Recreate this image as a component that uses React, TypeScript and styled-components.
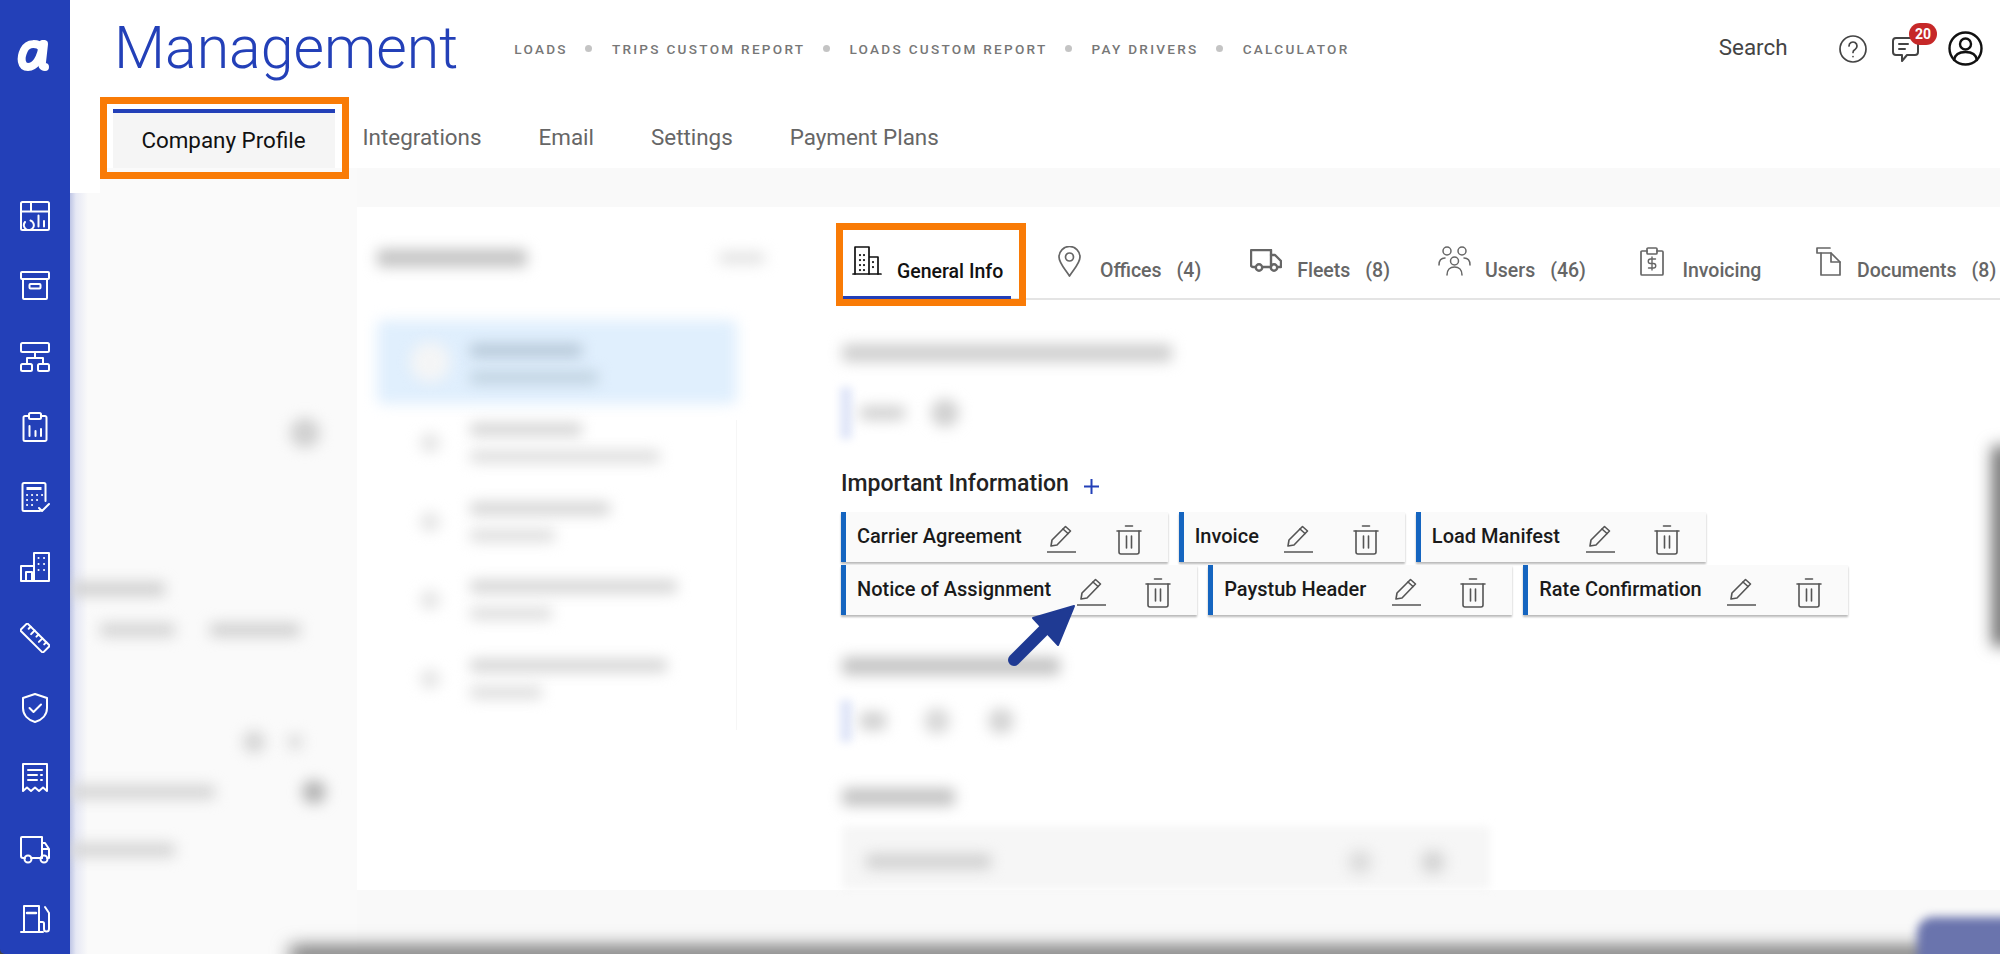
import React from "react";
import styled, { createGlobalStyle } from "styled-components";

const Global = createGlobalStyle`
  html, body { margin: 0; padding: 0; background: #fff; }
  body { font-family: Roboto, "Liberation Sans", sans-serif; overflow: hidden; }
  * { box-sizing: border-box; }
`;

const App_ = styled.div`
  position: relative;
  display: flex;
  width: 2000px;
  height: 954px;
  overflow: hidden;
  background: #444;
`;

const Sidebar = styled.nav`
  position: relative;
  z-index: 3;
  flex: 0 0 70px;
  display: flex;
  flex-direction: column;
  align-items: center;
  gap: 40.3px;
  padding-top: 201px;
  background: #2340b8;
  border-bottom-left-radius: 5px;
`;

const LogoMark = styled.svg`
  position: absolute;
  left: 15px;
  top: 39px;
`;

const SideIcon = styled.svg`
  display: block;
  flex: none;
  fill: none;
  stroke: #fff;
  stroke-width: 2;
  stroke-linecap: round;
  stroke-linejoin: round;
`;

const Main = styled.div`
  flex: 1;
  display: flex;
  flex-direction: column;
  min-width: 0;
  background: #fff;
`;

const Header = styled.header`
  position: relative;
  z-index: 2;
  flex: 0 0 168px;
  background: #fff;
  display: flex;
  flex-direction: column;
  &::after {
    content: "";
    position: absolute;
    left: 0;
    top: 100%;
    width: 30px;
    height: 25px;
    background: #fff;
  }
`;

const TopRow = styled.div`
  flex: 0 0 97px;
  display: flex;
  align-items: center;
  padding: 0 17px 0 44px;
`;

const Title = styled.h1`
  margin: 0 0 2px;
  font-size: 59px;
  line-height: 70px;
  font-weight: 300;
  color: #2340b8;
  letter-spacing: 0;
`;

const QuickNav = styled.div`
  display: flex;
  align-items: center;
  margin: 0 0 0 56px;
`;

const QuickLink = styled.span`
  font-size: 13.6px;
  font-weight: 500;
  letter-spacing: 2.27px;
  color: #777;
  white-space: nowrap;
`;

const Dot = styled.i`
  width: 7px;
  height: 7px;
  border-radius: 50%;
  background: #c4c4c4;
  margin: 0 19.5px 0 17.5px;
`;

const HeaderRight = styled.div`
  margin-left: auto;
  display: flex;
  align-items: center;
`;

const Search = styled.span`
  font-size: 22.4px;
  color: #444;
  margin: 0 51.5px 4px 0;
`;

const HeadIcon = styled.svg`
  display: block;
  fill: none;
  stroke: ${(p) => p.color || "#444"};
  stroke-width: 2;
  stroke-linecap: round;
  stroke-linejoin: round;
`;

const ChatWrap = styled.div`
  position: relative;
  margin: 0 25px 0 25px;
`;

const Badge = styled.span`
  position: absolute;
  left: 17px;
  top: -13px;
  width: 28px;
  height: 22px;
  border-radius: 11px;
  background: #c62828;
  color: #fff;
  font-size: 14px;
  font-weight: 700;
  line-height: 22px;
  text-align: center;
`;

const MainTabs = styled.div`
  display: flex;
  align-items: flex-start;
  padding: 12px 0 0 42.5px;
  gap: 57px;
`;

const MainTab = styled.div`
  font-size: 22.4px;
  line-height: 30px;
  color: #666;
  white-space: nowrap;
  margin-top: 13px;
`;

const ActiveMainTab = styled.div`
  position: relative;
  width: 222px;
  height: 59px;
  margin-right: -29px;
  border-top: 4px solid #2340b8;
  background: #f5f5f5;
  color: #111;
  font-size: 22.4px;
  line-height: 54px;
  text-align: center;
  &::after {
    content: "";
    position: absolute;
    left: -12.5px;
    right: -14px;
    top: -16px;
    bottom: -11px;
    border: 7px solid #f97b06;
  }
`;

const Body = styled.div`
  position: relative;
  flex: 1;
  display: flex;
  background: #f9f9f9;
  min-height: 0;
`;

const LeftCol = styled.aside`
  position: relative;
  flex: 0 0 287px;
  background: linear-gradient(90deg, #bfc6e6 0, #e6e8f4 6px, #fafafa 18px);
  padding-top: 26px;
`;

const Panel = styled.section`
  flex: 1;
  height: 683px;
  margin-top: 39px;
  background: #fff;
  display: flex;
  min-width: 0;
`;

const ListCol = styled.div`
  flex: 0 0 486px;
  padding: 41px 0 0 20px;
  position: relative;
`;

const Fuzz = styled.div<{ $w: number; $h?: number; $c?: string; $r?: number; $b?: number }>`
  flex: none;
  width: ${(p) => p.$w}px;
  height: ${(p) => p.$h ?? 16}px;
  background: ${(p) => p.$c ?? "#d4d4d4"};
  border-radius: ${(p) => p.$r ?? 4}px;
  filter: blur(${(p) => p.$b ?? 7}px);
`;

const ListHead = styled.div`
  display: flex;
  align-items: center;
  justify-content: space-between;
  width: 388px;
  height: 20px;
  margin-bottom: 52px;
`;

const ListRow = styled.div<{ $sel?: boolean }>`
  position: relative;
  display: flex;
  align-items: center;
  gap: ${(p) => (p.$sel ? 20 : 30)}px;
  width: 360px;
  height: ${(p) => (p.$sel ? 84 : 78.5)}px;
  padding-left: ${(p) => (p.$sel ? 33 : 43)}px;
`;

const SelectedBg = styled.div`
  position: absolute;
  inset: 0;
  background: #e0effd;
  border-radius: 6px;
  filter: blur(7px);
`;

const RowLines = styled.div<{ $top?: number }>`
  position: relative;
  display: flex;
  flex-direction: column;
  gap: 14px;
  margin-top: ${(p) => p.$top ?? 0}px;
`;

const RowCircle = styled.div<{ $s: number; $c: string }>`
  position: relative;
  flex: none;
  width: ${(p) => p.$s}px;
  height: ${(p) => p.$s}px;
  border-radius: 50%;
  background: ${(p) => p.$c};
  filter: blur(7px);
`;

const ListDivider = styled.div`
  position: absolute;
  left: 379px;
  top: 213px;
  width: 1px;
  height: 310px;
  background: #f6f6f6;
`;

const RightCol = styled.div`
  flex: 1;
  min-width: 0;
  padding-top: 23px;
  display: flex;
  flex-direction: column;
`;

const InfoTabs = styled.div`
  display: flex;
  align-items: stretch;
  height: 70px;
  border-bottom: 2px solid #e4e4e4;
`;

const InfoTab = styled.div<{ $lead: number; $gap: number }>`
  display: flex;
  align-items: flex-end;
  gap: ${(p) => p.$gap}px;
  margin-left: ${(p) => p.$lead}px;
  padding-bottom: 15px;
  font-size: 19.5px;
  font-weight: 500;
  line-height: 24px;
  color: #666;
  white-space: nowrap;
`;

const ActiveInfoTab = styled.div`
  position: relative;
  width: 168px;
  height: 69px;
  padding: 0 0 12px 9px;
  display: flex;
  align-items: flex-end;
  gap: 15px;
  border-bottom: 3px solid #2340b8;
  font-size: 19.5px;
  font-weight: 500;
  line-height: 24px;
  color: #111;
  white-space: nowrap;
  &::after {
    content: "";
    position: absolute;
    left: -7px;
    right: -15px;
    top: -7px;
    bottom: -10px;
    border: 7px solid #f97b06;
  }
`;

const TabIcon = styled.svg<{ $mb: number; $sw?: number }>`
  display: block;
  flex: none;
  margin-bottom: ${(p) => p.$mb}px;
  fill: none;
  stroke: currentColor;
  stroke-width: ${(p) => p.$sw ?? 1.7};
  stroke-linecap: round;
  stroke-linejoin: round;
`;

const Count = styled.span`
  margin-left: 15px;
`;

const Section = styled.div`
  display: flex;
  flex-direction: column;
`;

const FuzzHead = styled.div<{ $top: number }>`
  display: flex;
  align-items: center;
  height: 20px;
  margin: ${(p) => p.$top}px 0 0 -1px;
`;

const FuzzChip = styled.div<{ $w: number; $h: number; $top: number; $gap: number }>`
  position: relative;
  display: flex;
  align-items: center;
  gap: ${(p) => p.$gap}px;
  width: ${(p) => p.$w}px;
  height: ${(p) => p.$h}px;
  margin: ${(p) => p.$top}px 0 0 -3px;
  padding-left: 20px;
  &::before {
    content: "";
    position: absolute;
    left: 0;
    top: 4px;
    bottom: 4px;
    width: 12px;
    background: #dfe5f8;
    filter: blur(4px);
  }
`;

const SectionTitle = styled.h2`
  margin: 26px 0 13px -2px;
  display: flex;
  align-items: center;
  gap: 15px;
  font-size: 23px;
  line-height: 30px;
  font-weight: 500;
  color: #222;
`;

const Plus = styled.svg`
  display: block;
  margin-top: 4px;
  stroke: #2340b8;
  stroke-width: 2;
`;

const CardRow = styled.div`
  display: flex;
  gap: 11px;
  margin: 0 0 3px -2px;
`;

const Card = styled.div`
  display: flex;
  align-items: flex-start;
  height: 50px;
  padding: 13px 26px 0 11px;
  background: #fafafa;
  border-left: 5px solid #1565c0;
  box-shadow: 0 2px 2px rgba(0, 0, 0, 0.28);
`;

const CardLabel = styled.span`
  font-size: 20px;
  line-height: 24px;
  font-weight: 500;
  color: #1a1a1a;
  white-space: nowrap;
  margin: -1px 25.5px 0 0;
`;

const ActionIcon = styled.svg<{ $ml?: number }>`
  display: block;
  flex: none;
  margin-left: ${(p) => p.$ml ?? 0}px;
  fill: none;
  stroke: #555;
  stroke-width: 1.6;
  stroke-linecap: round;
  stroke-linejoin: round;
`;

const FuzzField = styled.div`
  position: relative;
  display: flex;
  align-items: center;
  width: 648px;
  height: 63px;
  margin: 19px 0 0 -1px;
  padding: 8px 45px 0 24px;
  &::before {
    content: "";
    position: absolute;
    inset: 0;
    background: #f6f6f6;
    border-radius: 4px;
    filter: blur(4px);
  }
`;

const FieldActions = styled.div`
  margin-left: auto;
  display: flex;
  gap: 49px;
`;

const LeftRow = styled.div<{ $top: number; $left?: number; $gap?: number }>`
  position: relative;
  display: flex;
  align-items: center;
  gap: ${(p) => p.$gap ?? 35}px;
  margin-top: ${(p) => p.$top}px;
  padding-left: ${(p) => p.$left ?? 0}px;
`;

const BottomShade = styled.div`
  position: absolute;
  left: 220px;
  right: -20px;
  bottom: -10px;
  height: 18px;
  background: #6f6f6f;
  filter: blur(9px);
`;

const Fab = styled.div`
  position: absolute;
  right: -25px;
  bottom: -25px;
  width: 108px;
  height: 62px;
  border-radius: 16px;
  background: #6a74ad;
  filter: blur(5px);
`;

const EdgeShade = styled.div`
  position: absolute;
  right: -12px;
  top: 278px;
  width: 20px;
  height: 200px;
  background: #6f6f6f;
  filter: blur(8px);
`;

const Arrow = styled.svg`
  position: absolute;
  left: 1000px;
  top: 596px;
  z-index: 4;
`;

const Pencil = () => (
  <ActionIcon width="29" height="28" viewBox="0 0 29 28">
    <path d="M4 21 5 15 18.5 1.5 23.5 6 10 20z" />
    <path d="M16 4l5 4.5" />
    <path d="M0 27h29" />
  </ActionIcon>
);

const Trash = () => (
  <ActionIcon $ml={39.5} width="26" height="30" viewBox="0 0 26 30">
    <path d="M9.5 1h7M1 6h24" />
    <path d="M3 6v21a2 2 0 0 0 2 2h16a2 2 0 0 0 2-2V6" />
    <path d="M10.5 11v12M15.5 11v12" />
  </ActionIcon>
);

const InfoCard = ({ label }: { label: string }) => (
  <Card>
    <CardLabel>{label}</CardLabel>
    <Pencil />
    <Trash />
  </Card>
);

const sideIcons: React.ReactNode[] = [
  <>
    <rect x="1" y="1" width="28" height="28" rx="1.5" />
    <path d="M1 10.5h28M11 1v9.5" />
    <path d="M10.5 19.5a5 5 0 1 1-5.5 1.5" />
    <path d="M18.5 14.5v11M24 20v5.5" />
  </>,
  <>
    <rect x="1" y="1" width="28" height="7" rx="1" />
    <path d="M3 8v19a1 1 0 0 0 1 1h22a1 1 0 0 0 1-1V8" />
    <rect x="9.5" y="13" width="11" height="4.5" rx="1" />
  </>,
  <>
    <rect x="1" y="1" width="28" height="9" rx="1.5" />
    <path d="M15 10v6M7 22v-6h16v6" />
    <rect x="1" y="22" width="11" height="7" rx="1.5" />
    <rect x="18" y="22" width="11" height="7" rx="1.5" />
  </>,
  <>
    <path d="M9 4H5a1.5 1.5 0 0 0-1.5 1.5V27.5A1.5 1.5 0 0 0 5 29h20a1.5 1.5 0 0 0 1.5-1.5V5.5A1.5 1.5 0 0 0 25 4h-4" />
    <rect x="9" y="1" width="12" height="6" rx="1.5" />
    <path d="M9.5 14v10M15.5 19v5M21 17v7" />
  </>,
  <>
    <path d="M20 29H4a1.5 1.5 0 0 1-1.5-1.5V2.5A1.5 1.5 0 0 1 4 1h20a1.5 1.5 0 0 1 1.5 1.5V19" />
    <path d="M6.5 6.5h15" strokeWidth="3" strokeLinecap="butt" />
    <path d="M7 13h.1M12 13h.1M17 13h.1M22 13h.1M7 18h.1M12 18h.1M17 18h.1M7 23h.1M12 23h.1" />
    <path d="M19 26l3 3 7-7" />
  </>,
  <>
    <path d="M1 29V14h13V1h15v28zM14 14v15" />
    <path d="M6 29v-9h6v9" />
    <path d="M18.5 6h.1M24 6h.1M18.5 12h.1M24 12h.1M18.5 18h.1M24 18h.1" />
  </>,
  <>
    <g transform="rotate(45 15 15)">
      <rect x="-1" y="10" width="32" height="10" rx="1" />
      <path d="M4 10v3M9.500 10v5M15 10v3M20.500 10v5M26 10v3" />
    </g>
  </>,
  <>
    <path d="M15 1 3 5v10c0 7 5 12 12 14 7-2 12-7 12-14V5z" />
    <path d="M9.5 15l4 4 7.5-7.5" />
  </>,
  <>
    <path d="M3 28V1h24v27l-4-3.5L19 28l-4-3.5L11 28l-4-3.5z" />
    <path d="M8 7h14M8 12h9M8 17h9M21 12h1M21 17h1" />
  </>,
  <>
    <path d="M5 24H3a2 2 0 0 1-2-2V4a1 1 0 0 1 1-1h20v21H11" />
    <path d="M22 9h3l4 6v9h-2M22 24h-1M22 15h7" />
    <circle cx="8" cy="25" r="3.5" />
    <circle cx="24" cy="25" r="3.5" />
  </>,
  <>
    <path d="M1 28h22M4 28V2h15v26" />
    <path d="M7 9h9" strokeWidth="2.5" />
    <path d="M19 18h3.5a1.5 1.5 0 0 1 1.5 1.5V25a2.5 2.5 0 0 0 5 0V9l-4-6" />
  </>,
];

export default function App() {
  return (
    <App_>
      <Global />
      <Sidebar>
        <LogoMark width="36" height="33" viewBox="0 0 36 33">
          <g fill="none" stroke="#fff" strokeWidth="8" strokeLinecap="round">
            <path d="M27 9C23 4 13 3 9 11 5 19 6 28 13 28c7 0 13-8 15-23" />
            <path d="M29 5 27 23c-.3 3 .5 5 3 5" />
          </g>
        </LogoMark>
        {sideIcons.map((icon, i) => (
          <SideIcon key={i} width="30" height="30" viewBox="0 0 30 30">
            {icon}
          </SideIcon>
        ))}
      </Sidebar>

      <Main>
        <Header>
          <TopRow>
            <Title>Management</Title>
            <QuickNav>
              <QuickLink>LOADS</QuickLink>
              <Dot />
              <QuickLink>TRIPS CUSTOM REPORT</QuickLink>
              <Dot />
              <QuickLink>LOADS CUSTOM REPORT</QuickLink>
              <Dot />
              <QuickLink>PAY DRIVERS</QuickLink>
              <Dot />
              <QuickLink>CALCULATOR</QuickLink>
            </QuickNav>
            <HeaderRight>
              <Search>Search</Search>
              <HeadIcon width="28" height="28" viewBox="0 0 28 28">
                <g strokeWidth="1.7">
                  <circle cx="14" cy="14" r="13" />
                  <path d="M10 11a4 4 0 1 1 6 3.5c-1.5.8-2 1.5-2 3" />
                  <path d="M14 21.5v.1" />
                </g>
              </HeadIcon>
              <ChatWrap>
                <HeadIcon width="31" height="26" viewBox="0 0 31 26">
                  <path d="M26 6v10a3 3 0 0 1-3 3h-8l-5 6v-6H4a3 3 0 0 1-3-3V5a3 3 0 0 1 3-3h16" />
                  <path d="M7 8h9M7 13h6" />
                </HeadIcon>
                <Badge>20</Badge>
              </ChatWrap>
              <HeadIcon color="#111" width="35" height="35" viewBox="0 0 35 35">
                <g strokeWidth="2.4">
                  <circle cx="17.5" cy="17.5" r="16" />
                  <circle cx="17.5" cy="13" r="5.5" />
                  <path d="M6 29c1-6 5-8 11.5-8S28 23 29 29" />
                </g>
              </HeadIcon>
            </HeaderRight>
          </TopRow>
          <MainTabs>
            <ActiveMainTab>Company Profile</ActiveMainTab>
            <MainTab>Integrations</MainTab>
            <MainTab>Email</MainTab>
            <MainTab>Settings</MainTab>
            <MainTab>Payment Plans</MainTab>
          </MainTabs>
        </Header>

        <Body>
          <LeftCol>
            <LeftRow $top={224} $left={220}>
              <RowCircle $s={30} $c="#d0d0d0" />
            </LeftRow>
            <LeftRow $top={134} $left={0}>
              <Fuzz $w={95} $h={14} $c="#cfcfcf" />
            </LeftRow>
            <LeftRow $top={27} $left={30}>
              <Fuzz $w={75} $h={14} $c="#d4d4d4" />
              <Fuzz $w={90} $h={14} $c="#d0d0d0" />
            </LeftRow>
            <LeftRow $top={94} $left={173} $gap={22}>
              <RowCircle $s={22} $c="#d4d4d4" />
              <RowCircle $s={16} $c="#dcdcdc" />
            </LeftRow>
            <LeftRow $top={27} $left={0} $gap={87}>
              <Fuzz $w={145} $h={14} $c="#d4d4d4" />
              <RowCircle $s={24} $c="#b4b4b4" />
            </LeftRow>
            <LeftRow $top={39} $left={0}>
              <Fuzz $w={105} $h={14} $c="#d4d4d4" />
            </LeftRow>
          </LeftCol>

          <Panel>
            <ListCol>
              <ListHead>
                <Fuzz $w={150} $h={18} $c="#c4c4c4" />
                <Fuzz $w={46} $h={12} $c="#e2e2e2" />
              </ListHead>
              <ListRow $sel>
                <SelectedBg />
                <RowCircle $s={40} $c="#f4f5f6" />
                <RowLines $top={4}>
                  <Fuzz $w={112} $h={13} $c="#b4c6d6" />
                  <Fuzz $w={128} $h={13} $c="#c0d2e0" />
                </RowLines>
              </ListRow>
              {[
                [112, 190],
                [140, 85],
                [207, 82],
                [197, 72],
              ].map(([a, b], i) => (
                <ListRow key={i}>
                  <RowCircle $s={20} $c="#e4e4e4" />
                  <RowLines>
                    <Fuzz $w={a} $h={13} $c="#d4d4d4" />
                    <Fuzz $w={b} $h={13} $c="#dedede" />
                  </RowLines>
                </ListRow>
              ))}
              <ListDivider />
            </ListCol>

            <RightCol>
              <InfoTabs>
                <ActiveInfoTab>
                  <TabIcon $mb={9} width="30" height="29" viewBox="0 0 30 29">
                    <path d="M1 28h28" />
                    <path d="M3 28V1h14v27M17 11h9v17" />
                    <path d="M8 9v.1M12 9v.1M8 14v.1M12 14v.1M8 19v.1M12 19v.1M8 24v.1M12 24v.1M21 16v.1M21 21v.1" strokeWidth="2.2" />
                  </TabIcon>
                  General Info
                </ActiveInfoTab>
                <InfoTab $lead={47} $gap={19}>
                  <TabIcon $mb={6} width="23" height="31" viewBox="0 0 23 31">
                    <path d="M11.5 30C7 23 1 17 1 11a10.5 10.5 0 0 1 21 0c0 6-6 12-10.5 19z" />
                    <circle cx="11.5" cy="11" r="4" />
                  </TabIcon>
                  <span>
                    Offices<Count>(4)</Count>
                  </span>
                </InfoTab>
                <InfoTab $lead={49} $gap={15}>
                  <TabIcon $mb={11} $sw={2.4} width="32" height="23" viewBox="0 0 32 23">
                    <path d="M5 18H3a2 2 0 0 1-2-2V2a1 1 0 0 1 1-1h19v17H13" />
                    <path d="M21 6h4l6 6v6h-3" />
                    <circle cx="9" cy="18.5" r="3.2" />
                    <circle cx="24" cy="18.5" r="3.2" />
                  </TabIcon>
                  <span>
                    Fleets<Count>(8)</Count>
                  </span>
                </InfoTab>
                <InfoTab $lead={48} $gap={14}>
                  <TabIcon $mb={7} $sw={1.5} width="33" height="30" viewBox="0 0 33 30">
                    <circle cx="9" cy="5" r="4" />
                    <circle cx="24" cy="5" r="4" />
                    <circle cx="16.5" cy="15" r="4" />
                    <path d="M1 19c0-5 2-7 6-7M32 19c0-5-2-7-6-7M9 29c0-5 3-8 7.5-8s7.5 3 7.5 8" />
                  </TabIcon>
                  <span>
                    Users<Count>(46)</Count>
                  </span>
                </InfoTab>
                <InfoTab $lead={54} $gap={18.5}>
                  <TabIcon $mb={7} width="24" height="29" viewBox="0 0 24 29">
                    <path d="M7 4H2a1 1 0 0 0-1 1v22a1 1 0 0 0 1 1h20a1 1 0 0 0 1-1V5a1 1 0 0 0-1-1h-5" />
                    <rect x="7" y="1" width="10" height="6" rx="1" />
                    <path d="M15.5 12H10.5a2 2 0 0 0 0 4.5h3a2 2 0 0 1 0 4.5H8.5M12 10v13" strokeWidth="1.4" />
                  </TabIcon>
                  <span>Invoicing</span>
                </InfoTab>
                <InfoTab $lead={55} $gap={15.5}>
                  <TabIcon $mb={7} width="25" height="29" viewBox="0 0 25 29">
                    <path d="M5 6H1V1h13" />
                    <path d="M5 6h10l9 9v13H5z" />
                    <path d="M15 6v9h9" />
                  </TabIcon>
                  <span>
                    Documents<Count>(8)</Count>
                  </span>
                </InfoTab>
              </InfoTabs>

              <Section>
                <FuzzHead $top={43}>
                  <Fuzz $w={330} $h={18} $c="#cfcfcf" />
                </FuzzHead>
                <FuzzChip $w={160} $h={60} $top={20} $gap={26}>
                  <Fuzz $w={45} $h={14} $c="#d0d0d0" />
                  <RowCircle $s={28} $c="#d0d0d0" />
                </FuzzChip>

                <SectionTitle>
                  Important Information
                  <Plus width="15" height="15" viewBox="0 0 15 15">
                    <path d="M7.5 0v15M0 7.5h15" />
                  </Plus>
                </SectionTitle>

                <CardRow>
                  <InfoCard label="Carrier Agreement" />
                  <InfoCard label="Invoice" />
                  <InfoCard label="Load Manifest" />
                </CardRow>
                <CardRow>
                  <InfoCard label="Notice of Assignment" />
                  <InfoCard label="Paystub Header" />
                  <InfoCard label="Rate Confirmation" />
                </CardRow>

                <FuzzHead $top={38}>
                  <Fuzz $w={218} $h={18} $c="#c4c4c4" />
                </FuzzHead>
                <FuzzChip $w={205} $h={50} $top={20} $gap={38}>
                  <Fuzz $w={26} $h={18} $c="#d0d0d0" />
                  <RowCircle $s={26} $c="#d8d8d8" />
                  <RowCircle $s={26} $c="#d4d4d4" />
                </FuzzChip>
                <FuzzHead $top={41}>
                  <Fuzz $w={113} $h={18} $c="#c4c4c4" />
                </FuzzHead>
                <FuzzField>
                  <Fuzz $w={125} $h={15} $c="#d0d0d0" />
                  <FieldActions>
                    <RowCircle $s={24} $c="#dcdcdc" />
                    <RowCircle $s={24} $c="#d4d4d4" />
                  </FieldActions>
                </FuzzField>
              </Section>
            </RightCol>
          </Panel>

          <EdgeShade />
          <BottomShade />
          <Fab />
        </Body>
      </Main>

      <Arrow width="84" height="80" viewBox="0 0 84 80">
        <path d="M14 64 50 28" stroke="#1f3a93" strokeWidth="12" strokeLinecap="round" fill="none" />
        <path d="M74 10 33 22 58 49z" fill="#1f3a93" stroke="#1f3a93" strokeWidth="2" strokeLinejoin="round" />
      </Arrow>
    </App_>
  );
}
